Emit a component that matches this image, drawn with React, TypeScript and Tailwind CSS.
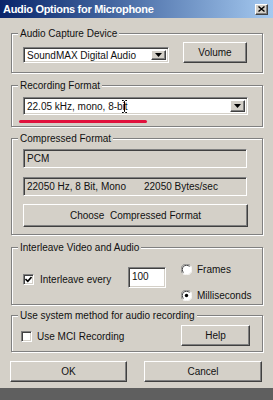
import React from "react";

const raised =
  "bg-[#d4d0c8] border border-t-white border-l-white border-r-[#404040] border-b-[#404040] shadow-[inset_-1px_-1px_0_#808080,inset_1px_1px_0_#d4d0c8]";
const sunken =
  "border border-t-[#808080] border-l-[#808080] border-r-white border-b-white shadow-[inset_1px_1px_0_#404040,inset_-1px_-1px_0_#d4d0c8]";

function Group({
  label,
  className,
  children,
}: {
  label: string;
  className: string;
  children?: React.ReactNode;
}) {
  return (
    <div
      className={
        "relative ml-[1px] w-[252px] border border-[#808080] shadow-[inset_1px_1px_0_#fff,1px_1px_0_#fff] " +
        className
      }
    >
      <span className="absolute left-[6px] top-[-7px] bg-[#d4d0c8] px-[2px] leading-[13px] whitespace-nowrap">
        {label}
      </span>
      {children}
    </div>
  );
}

function DropBtn() {
  return (
    <div className={"w-[15px] h-full flex items-center justify-center " + raised}>
      <svg width="7" height="4" viewBox="0 0 7 4">
        <path d="M0 0H7L3.5 4Z" fill="#000" />
      </svg>
    </div>
  );
}

function Check({ checked }: { checked?: boolean }) {
  return (
    <div className={"w-[11px] h-[11px] shrink-0 bg-white flex items-center justify-center " + sunken}>
      {checked && (
        <svg width="7" height="7" viewBox="0 0 7 7">
          <path d="M0.5 3L2.8 5.3L6.5 1" stroke="#000" strokeWidth="1.6" fill="none" />
        </svg>
      )}
    </div>
  );
}

function Radio({ checked }: { checked?: boolean }) {
  return (
    <svg width="11" height="11" viewBox="0 0 11 11" className="shrink-0">
      <circle cx="5.5" cy="5.5" r="5" fill="#fff" />
      <path d="M1.6 9.4A5 5 0 0 1 9.4 1.6" stroke="#808080" strokeWidth="1" fill="none" />
      <path d="M9.4 1.6A5 5 0 0 1 1.6 9.4" stroke="#fff" strokeWidth="1" fill="none" />
      <path d="M2.5 8.5A4 4 0 0 1 8.5 2.5" stroke="#404040" strokeWidth="1" fill="none" />
      {checked && <circle cx="5.5" cy="5.5" r="1.7" fill="#000" />}
    </svg>
  );
}

export default function App() {
  return (
    <div className="w-[273px] h-[400px] bg-[#5f5f5f] font-['Liberation_Sans',Arial,sans-serif] text-[10px] text-[#111] overflow-hidden whitespace-nowrap">
      <div className="h-[388px] bg-[#d4d0c8] flex flex-col">
        {/* Title bar */}
        <div className="h-[18px] flex items-center bg-gradient-to-r from-[#0a246a] to-[#a6caf0] pl-[3px] pr-[5px]">
          <span className="text-white font-bold text-[11px] leading-none tracking-[-0.3px]">
            Audio Options for Microphone
          </span>
          <div className="flex-1" />
          <div className={"w-[13px] h-[11px] flex items-center justify-center " + raised}>
            <svg width="7" height="6" viewBox="0 0 7 6">
              <path d="M0.5 0.5L6.5 5.5M6.5 0.5L0.5 5.5" stroke="#000" strokeWidth="1.4" />
            </svg>
          </div>
        </div>

        <div className="pl-[10px] flex flex-col">
          {/* Audio Capture Device */}
          <Group label="Audio Capture Device" className="mt-[15px] h-[40px]">
            <div className="flex items-start pl-[11px] pt-[8px]">
              <div className={"mt-[5px] w-[146px] h-[16px] bg-white flex items-stretch p-[2px] " + sunken}>
                <div className="flex-1 leading-[12px] pl-[1px]">SoundMAX Digital Audio</div>
                <DropBtn />
              </div>
              <button className={"ml-[14px] w-[64px] h-[21px] leading-none " + raised}>Volume</button>
            </div>
          </Group>

          {/* Recording Format */}
          <Group label="Recording Format" className="mt-[12px] h-[42px]">
            <div className="flex flex-col pt-[11px]">
              <div className={"ml-[11px] w-[225px] h-[18px] bg-white flex items-stretch p-[2px] " + sunken}>
                <div className="flex-1 leading-[14px] pl-[1px]">
                  22.05 kHz, mono, 8-b
                  <span className="relative inline-block w-0 h-[13px] align-top">
                    <svg className="absolute left-[-1px] top-0" width="5" height="13" viewBox="0 0 5 13">
                      <path
                        d="M0 0.5H1.5L2.5 1.5L3.5 0.5H5M2.5 1.5V11.5M0 12.5H1.5L2.5 11.5L3.5 12.5H5"
                        stroke="#000"
                        strokeWidth="1"
                        fill="none"
                      />
                    </svg>
                  </span>
                  it
                </div>
                <DropBtn />
              </div>
              <div className="ml-[7px] mt-[5px] w-[128px] h-[3px] rounded-full bg-[#e0103c]" />
            </div>
          </Group>

          {/* Compressed Format */}
          <Group label="Compressed Format" className="mt-[11px] h-[97px]">
            <div className="flex flex-col pl-[11px] pt-[10px]">
              <div className={"w-[224px] h-[19px] flex items-center pl-[3px] " + sunken}>PCM</div>
              <div className={"mt-[9px] w-[224px] h-[19px] flex items-center pl-[3px] " + sunken}>
                <span className="w-[117px]">22050 Hz, 8 Bit, Mono</span>
                <span>22050 Bytes/sec</span>
              </div>
              <button className={"mt-[8px] w-[225px] h-[23px] leading-none whitespace-pre " + raised}>
                {"Choose  Compressed Format"}
              </button>
            </div>
          </Group>

          {/* Interleave Video and Audio */}
          <Group label="Interleave Video and Audio" className="mt-[12px] h-[58px]">
            <div className="flex items-start pl-[11px] pt-[14px]">
              <div className="w-[105px] mt-[10px] flex items-center">
                <Check checked />
                <span className="ml-[6px]">Interleave every</span>
              </div>
              <div className={"mt-[5px] w-[38px] h-[21px] bg-white pl-[3px] pt-[2px] leading-[13px] " + sunken}>
                100
              </div>
              <div className="ml-[15px] flex flex-col">
                <div className="flex items-center">
                  <Radio />
                  <span className="ml-[5px]">Frames</span>
                </div>
                <div className="mt-[11px] flex items-center">
                  <Radio checked />
                  <span className="ml-[5px]">Milliseconds</span>
                </div>
              </div>
            </div>
          </Group>

          {/* Use system method */}
          <Group label="Use system method for audio recording" className="mt-[10px] h-[37px]">
            <div className="flex items-start pl-[9px] pt-[9px]">
              <div className="mt-[4px] flex items-center">
                <Check />
                <span className="ml-[5px]">Use MCI Recording</span>
              </div>
              <div className="flex-1" />
              <button className={"mr-[12px] w-[69px] h-[21px] leading-none " + raised}>Help</button>
            </div>
          </Group>

          {/* OK / Cancel */}
          <div className="mt-[9px] flex">
            <button className={"w-[117px] h-[21px] leading-none " + raised}>OK</button>
            <button className={"ml-[17px] w-[118px] h-[21px] leading-none " + raised}>Cancel</button>
          </div>
        </div>
      </div>
    </div>
  );
}
